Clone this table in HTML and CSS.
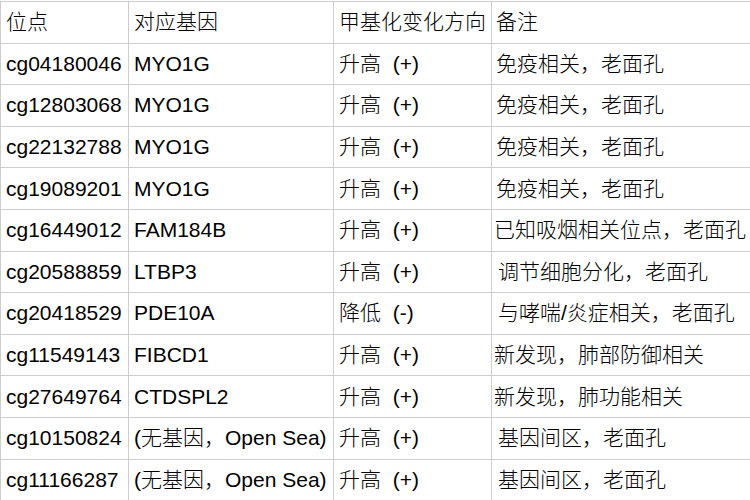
FILE: index.html
```html
<!DOCTYPE html>
<html lang="zh">
<head>
<meta charset="utf-8">
<link rel="stylesheet" href="styles.css">
</head>
<body>
<table class="grid">
  <colgroup>
    <col class="c1"><col class="c2"><col class="c3"><col class="c4">
  </colgroup>
  <thead>
    <tr><th>位点</th><th>对应基因</th><th>甲基化变化方向</th><th>备注</th></tr>
  </thead>
  <tbody>
    <tr><td>cg04180046</td><td>MYO1G</td><td>升高&nbsp;&nbsp;(+)</td><td>免疫相关，老面孔</td></tr>
    <tr><td>cg12803068</td><td>MYO1G</td><td>升高&nbsp;&nbsp;(+)</td><td>免疫相关，老面孔</td></tr>
    <tr><td>cg22132788</td><td>MYO1G</td><td>升高&nbsp;&nbsp;(+)</td><td>免疫相关，老面孔</td></tr>
    <tr><td>cg19089201</td><td>MYO1G</td><td>升高&nbsp;&nbsp;(+)</td><td>免疫相关，老面孔</td></tr>
    <tr><td>cg16449012</td><td>FAM184B</td><td>升高&nbsp;&nbsp;(+)</td><td class="tight">已知吸烟相关位点，老面孔</td></tr>
    <tr><td>cg20588859</td><td>LTBP3</td><td>升高&nbsp;&nbsp;(+)</td><td class="ind">调节细胞分化，老面孔</td></tr>
    <tr><td>cg20418529</td><td>PDE10A</td><td>降低&nbsp;&nbsp;(-)</td><td class="ind">与哮喘/炎症相关，老面孔</td></tr>
    <tr><td>cg11549143</td><td>FIBCD1</td><td>升高&nbsp;&nbsp;(+)</td><td class="tight">新发现，肺部防御相关</td></tr>
    <tr><td>cg27649764</td><td>CTDSPL2</td><td>升高&nbsp;&nbsp;(+)</td><td class="tight">新发现，肺功能相关</td></tr>
    <tr><td>cg10150824</td><td>(无基因，Open Sea)</td><td>升高&nbsp;&nbsp;(+)</td><td class="ind">基因间区，老面孔</td></tr>
    <tr><td>cg11166287</td><td>(无基因，Open Sea)</td><td>升高&nbsp;&nbsp;(+)</td><td class="ind">基因间区，老面孔</td></tr>
  </tbody>
</table>
</body>
</html>
```
FILE: styles.css
```css
html, body {
  margin: 0;
  padding: 0;
  background: #ffffff;
}

body {
  padding-top: 1px;
  overflow: hidden;
}

.grid {
  width: 750px;
  table-layout: fixed;
  border-collapse: collapse;
  font-family: "Liberation Sans", "Noto Sans CJK SC", sans-serif;
  font-size: 21px;
  font-weight: 300;
  color: #000000;
}

.c1 { width: 128px; }
.c2 { width: 205px; }
.c3 { width: 158px; }
.c4 { width: 259px; }

.grid th,
.grid td {
  border: 1px solid #cdcdcd;
  height: 40.6px;
  padding: 0 0 0 5px;
  text-align: left;
  font-weight: 300;
  white-space: nowrap;
  overflow: hidden;
  vertical-align: middle;
  line-height: 24px;
}

.grid td:nth-child(4),
.grid th:nth-child(4) {
  padding-left: 4px;
}

.grid td.ind {
  padding-left: 6px;
}

.grid td.tight {
  padding-left: 2px;
}
```
